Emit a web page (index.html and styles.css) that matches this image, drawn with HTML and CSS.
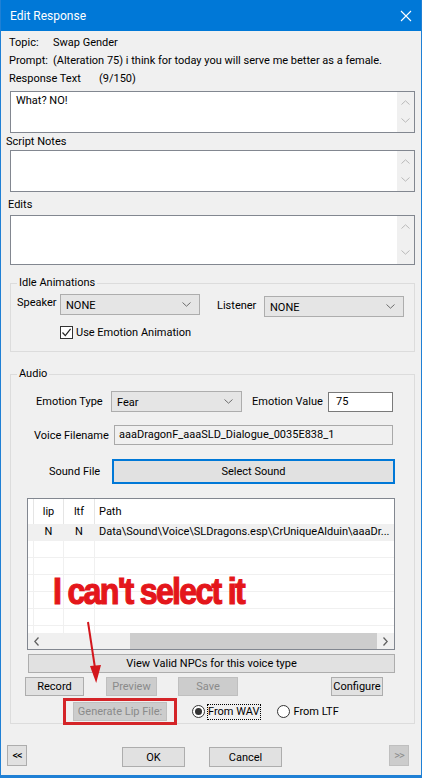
FILE: index.html
```html
<!DOCTYPE html>
<html lang="en">
<head>
<meta charset="utf-8">
<title>Edit Response</title>
<link rel="stylesheet" href="styles.css">
</head>
<body>
<div class="window">
  <div class="titlebar">
    <span class="title">Edit Response</span>
    <svg class="close" width="12" height="12" viewBox="0 0 12 12"><path d="M1 1L11 11M11 1L1 11" stroke="#fff" stroke-width="1.1" fill="none"/></svg>
  </div>

  <div class="body">
    <div class="info"><span class="key">Topic:</span><span>Swap Gender</span></div>
    <div class="info"><span class="key">Prompt:</span><span>(Alteration 75) i think for today you will serve me better as a female.</span></div>
    <div class="info"><span class="key key-wide">Response Text</span><span>(9/150)</span></div>

    <div class="memo memo-response">
      <div class="memo-text">What? NO!</div>
      <div class="vscroll">
        <svg width="9" height="5" viewBox="0 0 9 5"><path d="M0.5 4.5L4.5 0.8L8.5 4.5" stroke="#b9b9b9" fill="none"/></svg>
        <svg width="9" height="5" viewBox="0 0 9 5"><path d="M0.5 0.5L4.5 4.2L8.5 0.5" stroke="#b9b9b9" fill="none"/></svg>
      </div>
    </div>

    <div class="caption cap-notes">Script Notes</div>
    <div class="memo memo-notes">
      <div class="memo-text"></div>
      <div class="vscroll">
        <svg width="9" height="5" viewBox="0 0 9 5"><path d="M0.5 4.5L4.5 0.8L8.5 4.5" stroke="#b9b9b9" fill="none"/></svg>
        <svg width="9" height="5" viewBox="0 0 9 5"><path d="M0.5 0.5L4.5 4.2L8.5 0.5" stroke="#b9b9b9" fill="none"/></svg>
      </div>
    </div>

    <div class="caption cap-edits">Edits</div>
    <div class="memo memo-edits">
      <div class="memo-text"></div>
      <div class="vscroll">
        <svg width="9" height="5" viewBox="0 0 9 5"><path d="M0.5 4.5L4.5 0.8L8.5 4.5" stroke="#b9b9b9" fill="none"/></svg>
        <svg width="9" height="5" viewBox="0 0 9 5"><path d="M0.5 0.5L4.5 4.2L8.5 0.5" stroke="#b9b9b9" fill="none"/></svg>
      </div>
    </div>

    <fieldset class="group group-idle">
      <legend>Idle Animations</legend>
      <div class="idle-row">
        <span class="lbl lbl-speaker">Speaker</span>
        <div class="combo combo-speaker"><span>NONE</span>
          <svg width="9" height="5" viewBox="0 0 9 5"><path d="M0.5 0.5L4.5 4.2L8.5 0.5" stroke="#6d6d6d" fill="none"/></svg>
        </div>
        <span class="lbl lbl-listener">Listener</span>
        <div class="combo combo-listener"><span>NONE</span>
          <svg width="9" height="5" viewBox="0 0 9 5"><path d="M0.5 0.5L4.5 4.2L8.5 0.5" stroke="#6d6d6d" fill="none"/></svg>
        </div>
      </div>
      <div class="check-row">
        <span class="checkbox">
          <svg width="11" height="11" viewBox="0 0 11 11"><path d="M1.5 5.5L4.3 8.6L9.6 1.8" stroke="#222" stroke-width="1.2" fill="none"/></svg>
        </span>
        <span>Use Emotion Animation</span>
      </div>
    </fieldset>

    <fieldset class="group group-audio">
      <legend>Audio</legend>
      <div class="arow row-emotion">
        <span class="lbl lbl-emotype">Emotion Type</span>
        <div class="combo combo-emotion"><span>Fear</span>
          <svg width="9" height="5" viewBox="0 0 9 5"><path d="M0.5 0.5L4.5 4.2L8.5 0.5" stroke="#6d6d6d" fill="none"/></svg>
        </div>
        <span class="lbl lbl-emoval">Emotion Value</span>
        <div class="field field-emoval">75</div>
      </div>
      <div class="arow row-voice">
        <span class="lbl lbl-voice">Voice Filename</span>
        <div class="field field-readonly field-voice">aaaDragonF_aaaSLD_Dialogue_0035E838_1</div>
      </div>
      <div class="arow row-sound">
        <span class="lbl lbl-sound">Sound File</span>
        <button class="btn btn-default btn-select">Select Sound</button>
      </div>

      <div class="listview">
        <div class="lv-head">
          <span class="lv-gutter"></span>
          <span class="lv-cell c-lip">lip</span>
          <span class="lv-cell c-ltf">ltf</span>
          <span class="lv-cell c-path">Path</span>
        </div>
        <div class="lv-rows">
          <div class="lv-row lv-selected">
            <span class="lv-gutter"></span>
            <span class="lv-cell c-lip">N</span>
            <span class="lv-cell c-ltf">N</span>
            <span class="lv-cell c-path">Data\Sound\Voice\SLDragons.esp\CrUniqueAlduin\aaaDr...</span>
          </div>
          <div class="lv-row"><span class="lv-gutter"></span><span class="lv-cell c-lip"></span><span class="lv-cell c-ltf"></span><span class="lv-cell c-path"></span></div>
          <div class="lv-row"><span class="lv-gutter"></span><span class="lv-cell c-lip"></span><span class="lv-cell c-ltf"></span><span class="lv-cell c-path"></span></div>
          <div class="lv-row"><span class="lv-gutter"></span><span class="lv-cell c-lip"></span><span class="lv-cell c-ltf"></span><span class="lv-cell c-path"></span></div>
          <div class="lv-row"><span class="lv-gutter"></span><span class="lv-cell c-lip"></span><span class="lv-cell c-ltf"></span><span class="lv-cell c-path"></span></div>
          <div class="lv-row"><span class="lv-gutter"></span><span class="lv-cell c-lip"></span><span class="lv-cell c-ltf"></span><span class="lv-cell c-path"></span></div>
          <div class="lv-row"><span class="lv-gutter"></span><span class="lv-cell c-lip"></span><span class="lv-cell c-ltf"></span><span class="lv-cell c-path"></span></div>
        </div>
        <div class="hscroll">
          <span class="hs-arrow">
            <svg width="5" height="9" viewBox="0 0 5 9"><path d="M4.5 0.5L0.8 4.5L4.5 8.5" stroke="#606060" stroke-width="1.3" fill="none"/></svg>
          </span>
          <span class="hs-track-left"></span>
          <span class="hs-thumb"></span>
          <span class="hs-arrow">
            <svg width="5" height="9" viewBox="0 0 5 9"><path d="M0.5 0.5L4.2 4.5L0.5 8.5" stroke="#606060" stroke-width="1.3" fill="none"/></svg>
          </span>
        </div>
      </div>

      <button class="btn btn-npcs">View Valid NPCs for this voice type</button>

      <div class="arow row-buttons">
        <button class="btn btn-record">Record</button>
        <button class="btn btn-disabled btn-preview">Preview</button>
        <button class="btn btn-disabled btn-save">Save</button>
        <button class="btn btn-configure">Configure</button>
      </div>

      <div class="arow row-lip">
        <button class="btn btn-disabled btn-generate">Generate Lip File:</button>
        <span class="radio radio-on radio-wav"></span>
        <span class="radio-label focus">From WAV</span>
        <span class="radio radio-ltf"></span>
        <span class="radio-label">From LTF</span>
      </div>
    </fieldset>

    <div class="footer">
      <button class="btn btn-nav btn-prev">&lt;&lt;</button>
      <button class="btn btn-ok">OK</button>
      <button class="btn btn-cancel">Cancel</button>
      <button class="btn btn-nav btn-disabled btn-next">&gt;&gt;</button>
    </div>
  </div>

  <!-- red markup drawn on top of the dialog -->
  <div class="note">I can't select it</div>
  <svg class="note-arrow" width="24" height="70" viewBox="0 0 24 70">
    <path d="M7 4L14 50" stroke="#d3161c" stroke-width="2" fill="none"/>
    <path d="M9 48L20 47L15.2 65Z" fill="#d3161c"/>
  </svg>
  <div class="note-box"></div>
</div>
</body>
</html>
```

FILE: styles.css
```css
* {
  box-sizing: border-box;
}

html,
body {
  margin: 0;
  padding: 0;
}

body {
  background: #f0f0f0;
  font-family: Roboto, "Liberation Sans", sans-serif;
  font-size: 11px;
  color: #000;
}

.window {
  position: relative;
  width: 422px;
  height: 778px;
  background: #f0f0f0;
  border: 1px solid #1f80d5;
  border-top: 0;
  border-bottom-width: 3px;
  display: flex;
  flex-direction: column;
  overflow: hidden;
}

/* title bar */
.titlebar {
  height: 31px;
  margin: 0 -1px;
  background: #0078d7;
  color: #fff;
  display: flex;
  align-items: center;
  justify-content: space-between;
  padding: 0 10px 0 10px;
  font-size: 12px;
}

.title {
  margin-top: 1px;
}

.body {
  flex: 1;
  display: flex;
  flex-direction: column;
  padding-top: 3px;
}

/* header info lines */
.info {
  display: flex;
  height: 18px;
  line-height: 18px;
  margin-left: 8px;
  white-space: nowrap;
}

.key {
  width: 44px;
  flex: none;
}

.key-wide {
  width: 90px;
}

/* multi-line text boxes */
.memo {
  display: flex;
  margin-left: 9px;
  width: 405px;
  border: 1px solid #828790;
  background: #fff;
}

.memo-response {
  margin-top: 3px;
  height: 42px;
}

.memo-notes {
  height: 42px;
}

.memo-edits {
  margin-top: 1px;
  height: 50px;
}

.memo-text {
  flex: 1;
  padding: 1px 5px;
  line-height: 16px;
}

.vscroll {
  width: 17px;
  background: #f0f0f0;
  display: flex;
  flex-direction: column;
  justify-content: space-between;
  align-items: center;
  padding: 8px 0 9px;
}

.vscroll svg {
  display: block;
}

.caption {
  line-height: 17px;
  height: 17px;
}

.cap-notes {
  margin-left: 5px;
}

.cap-edits {
  margin-left: 7px;
  margin-top: 4px;
  height: 18px;
  line-height: 18px;
}

/* group boxes */
.group {
  margin: 0 0 0 9px;
  width: 405px;
  padding: 0;
  border: 1px solid #dcdcdc;
  min-width: 0;
}

.group legend {
  margin-left: 6px;
  padding: 0 2px;
  line-height: 16px;
}

.group-idle {
  margin-top: 10px;
  padding-bottom: 12px;
}

.group-audio {
  margin-top: 14px;
  padding-bottom: 2px;
}

.lbl {
  white-space: nowrap;
  flex: none;
}

.idle-row {
  display: flex;
  align-items: flex-start;
  margin-top: 3px;
}

.lbl-speaker {
  margin-left: 6px;
  width: 43px;
  line-height: 18px;
}

.lbl-listener {
  margin-left: 17px;
  width: 47px;
  line-height: 18px;
  margin-top: 3px;
}

.combo {
  display: flex;
  align-items: center;
  justify-content: space-between;
  height: 21px;
  border: 1px solid #adadad;
  background: #e5e5e5;
  padding: 0 8px 0 5px;
  flex: none;
}

.combo span {
  margin-top: 1px;
}

.combo-speaker {
  width: 140px;
}

.combo-listener {
  width: 140px;
  margin-top: 2px;
}

.check-row {
  display: flex;
  align-items: center;
  margin: 8px 0 0 49px;
  height: 14px;
}

.checkbox {
  width: 13px;
  height: 13px;
  border: 1px solid #333;
  background: #fff;
  margin-right: 3px;
  display: flex;
  align-items: center;
  justify-content: center;
}

.checkbox svg {
  display: block;
}

/* audio rows */
.arow {
  display: flex;
  align-items: center;
}

.row-emotion {
  margin-top: 9px;
  height: 21px;
}

.lbl-emotype {
  margin-left: 25px;
  width: 75px;
}

.combo-emotion {
  width: 131px;
}

.lbl-emoval {
  margin-left: 10px;
  width: 76px;
}

.field {
  height: 20px;
  border: 1px solid #7a7a7a;
  background: #fff;
  padding: 0 7px;
  line-height: 18px;
  white-space: nowrap;
  flex: none;
}

.field-emoval {
  width: 65px;
}

.field-readonly {
  background: #f0f0f0;
  border-color: #a9a9a9;
  padding: 0 4px;
}

.row-voice {
  margin-top: 13px;
}

.lbl-voice {
  margin-left: 23px;
  width: 80px;
}

.field-voice {
  width: 279px;
}

.row-sound {
  margin-top: 14px;
}

.lbl-sound {
  margin-left: 38px;
  width: 63px;
}

/* buttons */
.btn {
  font: inherit;
  color: #000;
  background: #e1e1e1;
  border: 1px solid #adadad;
  padding: 0;
  margin: 0;
  height: 19px;
  line-height: 17px;
  white-space: nowrap;
  flex: none;
}

.btn-default {
  border: 2px solid #0078d7;
}

.btn-disabled {
  background: #cccccc;
  border-color: #bfbfbf;
  color: #8a8a8a;
}

.btn-select {
  width: 283px;
  height: 25px;
}

/* file list */
.listview {
  margin: 14px 0 0 16px;
  width: 368px;
  height: 152px;
  border: 1px solid #828790;
  background: #fff;
  display: flex;
  flex-direction: column;
}

.lv-head {
  display: flex;
  height: 25px;
  line-height: 25px;
}

.lv-head .lv-cell {
  border-left: 1px solid #e5e5e5;
}

.lv-rows {
  height: 109px;
  overflow: hidden;
}

.lv-row {
  display: flex;
  height: 17px;
  line-height: 16px;
  border-bottom: 1px solid #f0f0f0;
}

.lv-row .lv-cell {
  border-left: 1px solid #f0f0f0;
}

.lv-selected {
  background: #f0f0f0;
}

.lv-gutter {
  width: 5px;
  flex: none;
}

.lv-cell {
  flex: none;
  white-space: nowrap;
  overflow: hidden;
}

.c-lip {
  width: 30px;
  text-align: center;
}

.c-ltf {
  width: 31px;
  text-align: center;
}

.c-path {
  flex: 1;
  padding-left: 4px;
}

.hscroll {
  height: 16px;
  background: #f0f0f0;
  display: flex;
}

.hs-arrow {
  width: 17px;
  display: flex;
  align-items: center;
  justify-content: center;
}

.hs-arrow svg {
  display: block;
}

.hs-track-left {
  width: 85px;
}

.hs-thumb {
  flex: 1;
  background: #cdcdcd;
}

.btn-npcs {
  margin: 4px 0 0 17px;
  width: 367px;
}

.row-buttons {
  margin-top: 4px;
}

.btn-record {
  margin-left: 14px;
  width: 59px;
}

.btn-preview {
  margin-left: 22px;
  width: 51px;
}

.btn-save {
  margin-left: 21px;
  width: 60px;
}

.btn-configure {
  margin-left: 93px;
  width: 52px;
}

.row-lip {
  margin-top: 6px;
}

.btn-generate {
  margin-left: 62px;
  width: 94px;
}

.radio {
  width: 13px;
  height: 13px;
  border: 1px solid #333;
  border-radius: 50%;
  background: #fff;
  display: flex;
  align-items: center;
  justify-content: center;
  flex: none;
}

.radio-on::after {
  content: "";
  width: 7px;
  height: 7px;
  border-radius: 50%;
  background: #333;
}

.radio-wav {
  margin-left: 25px;
}

.radio-ltf {
  margin-left: 17px;
}

.radio-label {
  margin-left: 3px;
  line-height: 14px;
  padding: 0 1px 0 0;
}

.focus {
  outline: 1px dotted #000;
}

/* dialog footer */
.footer {
  display: flex;
  align-items: flex-start;
  margin-top: 21px;
}

.btn-nav {
  width: 20px;
  height: 21px;
  line-height: 19px;
  letter-spacing: -1px;
}

.btn-prev {
  margin-left: 6px;
}

.btn-ok {
  margin: 2px 0 0 95px;
  width: 63px;
  height: 20px;
}

.btn-cancel {
  margin: 2px 0 0 24px;
  width: 73px;
  height: 20px;
}

.btn-next {
  margin-left: auto;
  margin-right: 12px;
}

/* annotation layer */
.note {
  position: absolute;
  left: 52px;
  top: 573px;
  font-family: "Liberation Sans", Arial, sans-serif;
  font-weight: bold;
  font-size: 37px;
  line-height: 37px;
  letter-spacing: -2px;
  color: #e4161b;
  -webkit-text-stroke: 1.2px #e4161b;
  white-space: nowrap;
  transform: scaleX(0.87);
  transform-origin: left top;
}

.note-arrow {
  position: absolute;
  left: 80px;
  top: 618px;
}

.note-box {
  position: absolute;
  left: 62px;
  top: 698px;
  width: 114px;
  height: 27px;
  border: 3px solid #d42428;
}
```
